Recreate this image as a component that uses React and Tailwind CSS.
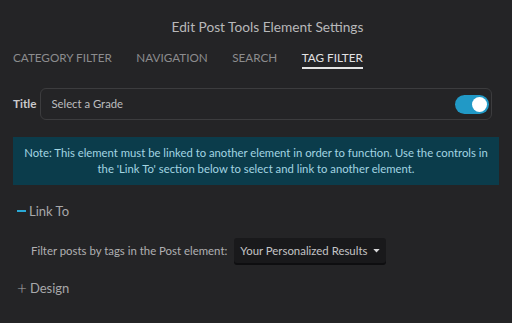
import React, { useState } from 'react';

const tabs = ['Category Filter', 'Navigation', 'Search', 'Tag Filter'];

const Toggle = ({ on, onChange }) => (
  <button
    onClick={() => onChange(!on)}
    className={`relative h-[19px] w-[34px] rounded-full ${on ? 'bg-[#2199c6]' : 'bg-[#555]'}`}
  >
    <span
      className={`absolute top-[2px] h-[15px] w-[15px] rounded-full bg-white ${on ? 'left-[17px]' : 'left-[2px]'}`}
    />
  </button>
);

export default function App() {
  const [active, setActive] = useState('Tag Filter');
  const [showTitle, setShowTitle] = useState(true);

  return (
    <div className="h-[323px] w-[512px] overflow-hidden bg-[#242426] font-['Lato',sans-serif] text-[#b4b4b6]">
      <div className="pt-[17px] pl-[23px] text-center text-[13.7px] leading-[20px] text-[#b8b8ba]">
        Edit Post Tools Element Settings
      </div>

      <div className="mt-[11px] flex gap-[24.5px] px-[13px]">
        {tabs.map((t) => (
          <button
            key={t}
            onClick={() => setActive(t)}
            className={`border-b-2 pb-[1px] text-[11.7px] leading-[18px] uppercase ${
              active === t ? 'border-[#e4e4e4] text-[#e2e2e4]' : 'border-transparent text-[#8c8c8e]'
            }`}
          >
            {t}
          </button>
        ))}
      </div>

      <div className="mt-[19px] flex items-center gap-[4px] pl-[13px] pr-[20px]">
        <span className="text-[11.7px] font-bold text-[#cacacc]">Title</span>
        <div className="flex h-[32px] flex-1 items-center justify-between rounded-[6px] border border-[#3c3c3e] pl-[10px] pr-[2px]">
          <span className="text-[11.3px] text-[#bdbdbf]">Select a Grade</span>
          <Toggle on={showTitle} onChange={setShowTitle} />
        </div>
      </div>

      <div className="mx-[13px] mt-[17px] bg-[#0b3c4b] px-[8px] py-[8px] text-center text-[11.3px] leading-[16px] text-[#a3d5e2]">
        Note: This element must be linked to another element in order to function. Use the controls in the 'Link To' section below to select and link to another element.
      </div>

      <div className="mt-[17px] flex items-center gap-[3px] pl-[17px] text-[13px] leading-[18px] text-[#a8a8aa]">
        <span className="h-[2px] w-[9px] bg-[#2aa9d6]" />
        <span>Link To</span>
      </div>

      <div className="mt-[18px] flex items-center gap-[7px] pl-[31px] text-[11.4px]">
        <span className="text-[#b0b0b2]">Filter posts by tags in the Post element:</span>
        <button className="flex h-[25px] items-center gap-[6px] rounded-[3px] bg-[#19191b] px-[6px] text-[#c4c4c6] shadow-[0_2px_0_#0e0e10]">
          Your Personalized Results
          <svg width="7" height="4" viewBox="0 0 8 5">
            <path d="M0 0h8L4 4.5z" fill="#d8d8da" />
          </svg>
        </button>
      </div>

      <div className="mt-[16px] flex items-center gap-[3px] pl-[17px] text-[13px] leading-[18px] text-[#a8a8aa]">
        <span className="text-[17px] leading-[18px] font-light">+</span>
        <span>Design</span>
      </div>
    </div>
  );
}
